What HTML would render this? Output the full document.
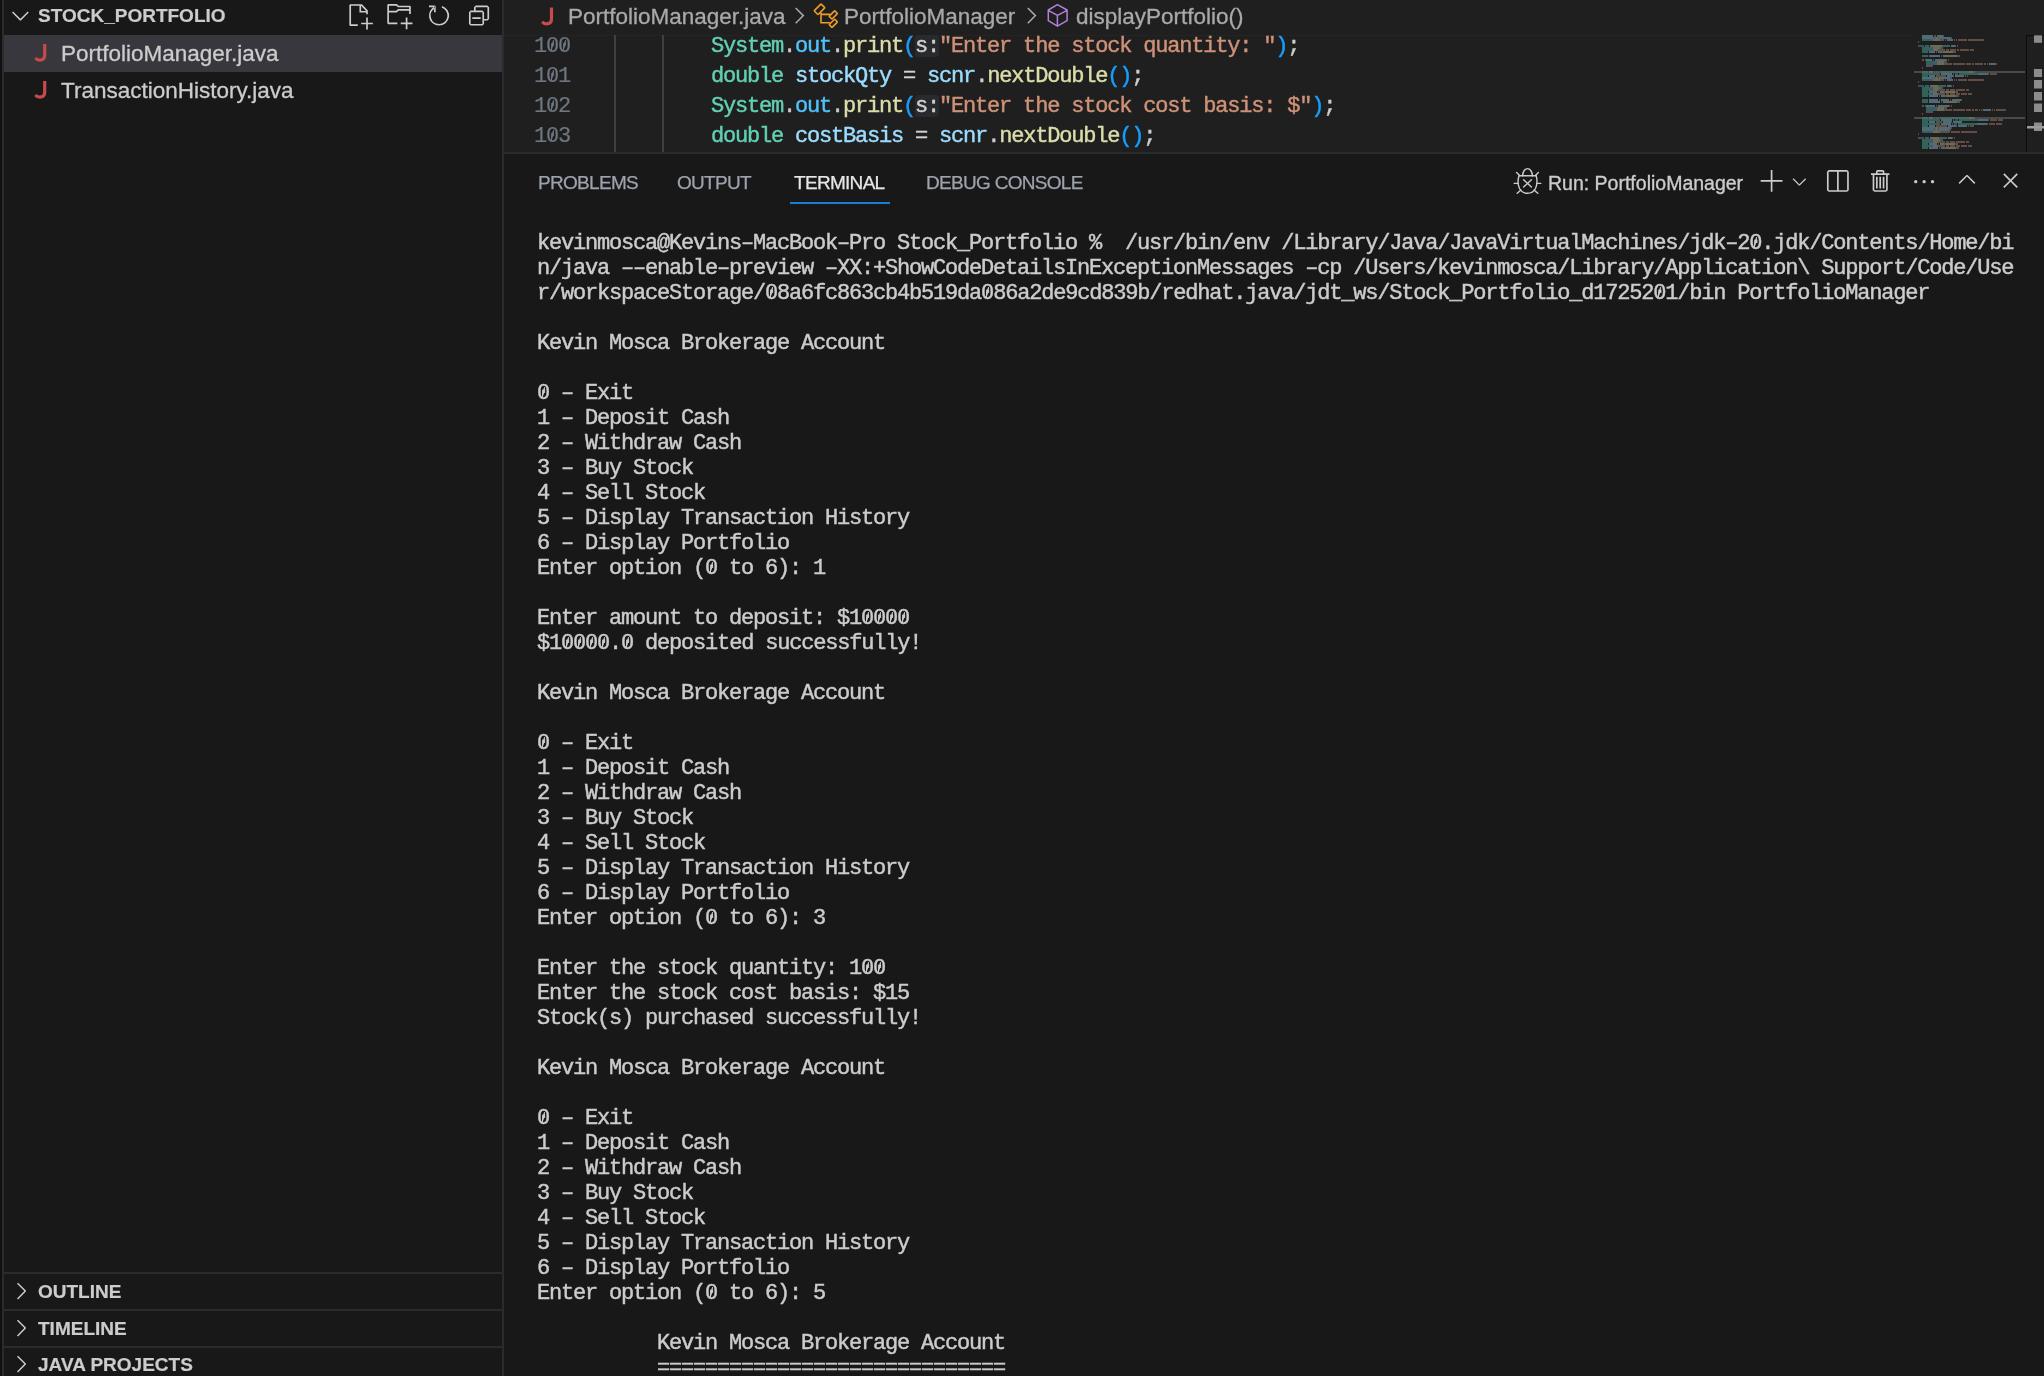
<!DOCTYPE html>
<html><head><meta charset="utf-8"><style>
*{margin:0;padding:0;box-sizing:border-box}
html,body{width:2044px;height:1376px;overflow:hidden;background:#181818}
body{position:relative;font-family:"Liberation Sans",sans-serif;color:#cccccc}
.abs{position:absolute}
.t{will-change:transform}
.mono{font-family:"Liberation Mono",monospace}
#strip{left:0;top:0;width:2px;height:1376px;background:#111111}
#strip2{left:2px;top:0;width:2px;height:1376px;background:#2b2b2b}
#side{left:4px;top:0;width:498px;height:1376px;background:#181818}
#vb{left:502px;top:0;width:2px;height:1376px;background:#2b2b2b}
#editor{left:504px;top:0;width:1540px;height:152px;background:#1f1f1f;overflow:hidden}
#hb{left:504px;top:152px;width:1540px;height:2px;background:#2b2b2b}
#panel{left:504px;top:154px;width:1540px;height:1222px;background:#181818}
.sechead{font-weight:bold;font-size:19px;color:#cccccc;white-space:nowrap;-webkit-text-stroke:0.2px currentColor}
.fname{font-size:22.5px;color:#cccccc;white-space:nowrap;-webkit-text-stroke:0.3px currentColor}
.term{left:537px;top:0;font-size:22px;letter-spacing:-1.2px;line-height:25px;white-space:pre;color:#cccccc;-webkit-text-stroke:0.45px #cccccc}
.tab{font-size:19px;letter-spacing:-0.7px;color:#9da3ad;white-space:nowrap;-webkit-text-stroke:0.25px currentColor}
.bc{font-size:22.5px;color:#a9a9a9;white-space:nowrap;-webkit-text-stroke:0.3px currentColor}
.code{font-family:"Liberation Mono",monospace;font-size:22px;letter-spacing:-1.2px;line-height:30px;white-space:pre;color:#cccccc;-webkit-text-stroke:0.45px currentColor}
.ln{font-family:"Liberation Mono",monospace;font-size:22px;letter-spacing:-1.2px;line-height:30px;white-space:pre;color:#6e7681;-webkit-text-stroke:0.2px currentColor}
.z{background:linear-gradient(to bottom right,transparent 28%,#cccccc 42%,#cccccc 58%,transparent 72%) no-repeat 4.6px 5.6px/2.9px 10px}
.ln .z{background-image:linear-gradient(to bottom right,transparent 28%,#6e7681 42%,#6e7681 58%,transparent 72%)}
.hint{background:#292a2d;border-radius:3px;width:23.4px;height:22px}
</style></head><body>
<div class="abs" id="strip"></div><div class="abs" id="strip2"></div><div class="abs" id="side"></div><div class="abs" id="vb"></div>
<div class="abs" id="editor"></div><div class="abs" id="hb"></div><div class="abs" id="panel"></div>
<div class="abs" style="left:504px;top:35px;width:1410px;height:1px;background:#242424"></div>
<div class="abs sechead t" style="left:38px;top:2px;line-height:28px">STOCK_PORTFOLIO</div>
<div class="abs" style="left:4px;top:35px;width:498px;height:37px;background:#37373d"></div>
<div class="abs fname t" style="left:61px;top:38.5px;line-height:30px">PortfolioManager.java</div>
<div class="abs fname t" style="left:61px;top:76px;line-height:30px">TransactionHistory.java</div>
<div class="abs" style="left:4px;top:1272px;width:498px;height:2px;background:#2b2b2b"></div>
<div class="abs sechead t" style="left:38px;top:1277.5px;line-height:28px">OUTLINE</div>
<div class="abs" style="left:4px;top:1309px;width:498px;height:2px;background:#2b2b2b"></div>
<div class="abs sechead t" style="left:38px;top:1314.5px;line-height:28px">TIMELINE</div>
<div class="abs" style="left:4px;top:1346px;width:498px;height:2px;background:#2b2b2b"></div>
<div class="abs sechead t" style="left:38px;top:1350.5px;line-height:28px">JAVA PROJECTS</div>
<div class="abs bc t" style="left:568px;top:1.5px;line-height:30px">PortfolioManager.java</div>
<div class="abs bc t" style="left:844px;top:1.5px;line-height:30px">PortfolioManager</div>
<div class="abs bc t" style="left:1076px;top:1.5px;line-height:30px">displayPortfolio()</div>
<div class="abs" style="left:614px;top:35px;width:2px;height:117px;background:#404040"></div>
<div class="abs" style="left:662px;top:35px;width:2px;height:117px;background:#404040"></div>
<div class="abs ln t" style="left:534px;top:32px">1<span class=z>0</span><span class=z>0</span></div>
<div class="abs ln t" style="left:534px;top:62px">1<span class=z>0</span>1</div>
<div class="abs ln t" style="left:534px;top:92px">1<span class=z>0</span>2</div>
<div class="abs ln t" style="left:534px;top:122px">1<span class=z>0</span>3</div>
<div class="abs code t" style="left:710.8px;top:32px"><span style="color:#62cfb3">System</span>.<span style="color:#4fc1ff">out</span>.<span style="color:#dcdcaa">print</span><span style="color:#179fff">(</span>  <span style="color:#ce9178">"Enter the stock quantity: "</span><span style="color:#179fff">)</span>;</div>
<div class="abs code t" style="left:710.8px;top:62px"><span style="color:#62cfb3">double</span> <span style="color:#9cdcfe">stockQty</span> <span style="color:#d4d4d4">=</span> <span style="color:#9cdcfe">scnr</span>.<span style="color:#dcdcaa">nextDouble</span><span style="color:#179fff">()</span>;</div>
<div class="abs code t" style="left:710.8px;top:92px"><span style="color:#62cfb3">System</span>.<span style="color:#4fc1ff">out</span>.<span style="color:#dcdcaa">print</span><span style="color:#179fff">(</span>  <span style="color:#ce9178">"Enter the stock cost basis: $"</span><span style="color:#179fff">)</span>;</div>
<div class="abs code t" style="left:710.8px;top:122px"><span style="color:#62cfb3">double</span> <span style="color:#9cdcfe">costBasis</span> <span style="color:#d4d4d4">=</span> <span style="color:#9cdcfe">scnr</span>.<span style="color:#dcdcaa">nextDouble</span><span style="color:#179fff">()</span>;</div>
<div class="abs hint" style="left:915.3px;top:34.9px"></div>
<div class="abs code t" style="left:915px;top:32px;color:#d0d0d0">s:</div>
<div class="abs hint" style="left:915.3px;top:94.9px"></div>
<div class="abs code t" style="left:915px;top:92px;color:#d0d0d0">s:</div>
<div class="abs tab t" style="left:538px;top:169px;line-height:28px">PROBLEMS</div>
<div class="abs tab t" style="left:677px;top:169px;line-height:28px">OUTPUT</div>
<div class="abs tab t" style="left:794px;top:169px;line-height:28px;color:#e7e7e7">TERMINAL</div>
<div class="abs tab t" style="left:926px;top:169px;line-height:28px">DEBUG CONSOLE</div>
<div class="abs" style="left:790px;top:202.3px;width:100px;height:1.6px;background:#1a7fd4"></div>
<div class="abs tab t" style="left:1548px;top:169px;line-height:28px;font-size:19.5px;letter-spacing:0;color:#cccccc;-webkit-text-stroke:0.35px #cccccc">Run: PortfolioManager</div>
<div class="abs mono term t" style="top:231px">kevinmosca@Kevins–MacBook–Pro Stock_Portfolio %  /usr/bin/env /Library/Java/JavaVirtualMachines/jdk–2<span class=z>0</span>.jdk/Contents/Home/bi
n/java ––enable–preview –XX:+ShowCodeDetailsInExceptionMessages –cp /Users/kevinmosca/Library/Application\ Support/Code/Use
r/workspaceStorage/<span class=z>0</span>8a6fc863cb4b519da<span class=z>0</span>86a2de9cd839b/redhat.java/jdt_ws/Stock_Portfolio_d17252<span class=z>0</span>1/bin PortfolioManager
 
Kevin Mosca Brokerage Account
 
<span class=z>0</span> – Exit
1 – Deposit Cash
2 – Withdraw Cash
3 – Buy Stock
4 – Sell Stock
5 – Display Transaction History
6 – Display Portfolio
Enter option (<span class=z>0</span> to 6): 1
 
Enter amount to deposit: $1<span class=z>0</span><span class=z>0</span><span class=z>0</span><span class=z>0</span>
$1<span class=z>0</span><span class=z>0</span><span class=z>0</span><span class=z>0</span>.<span class=z>0</span> deposited successfully!
 
Kevin Mosca Brokerage Account
 
<span class=z>0</span> – Exit
1 – Deposit Cash
2 – Withdraw Cash
3 – Buy Stock
4 – Sell Stock
5 – Display Transaction History
6 – Display Portfolio
Enter option (<span class=z>0</span> to 6): 3
 
Enter the stock quantity: 1<span class=z>0</span><span class=z>0</span>
Enter the stock cost basis: $15
Stock(s) purchased successfully!
 
Kevin Mosca Brokerage Account
 
<span class=z>0</span> – Exit
1 – Deposit Cash
2 – Withdraw Cash
3 – Buy Stock
4 – Sell Stock
5 – Display Transaction History
6 – Display Portfolio
Enter option (<span class=z>0</span> to 6): 5
 
          Kevin Mosca Brokerage Account
          =============================</div>
<svg class="abs" style="left:0;top:0" width="2044" height="1376">
<rect x="1922" y="35.35" width="11" height="1.3" fill="#9cdcfe" fill-opacity="0.62"/>
<rect x="1934" y="35.35" width="2" height="1.3" fill="#cccccc" fill-opacity="0.45"/>
<rect x="1937" y="35.35" width="6" height="1.3" fill="#9cdcfe" fill-opacity="0.62"/>
<rect x="1943" y="35.35" width="1" height="1.3" fill="#cccccc" fill-opacity="0.45"/>
<rect x="1922" y="37.35" width="12" height="1.3" fill="#9cdcfe" fill-opacity="0.62"/>
<rect x="1934" y="37.35" width="1" height="1.3" fill="#cccccc" fill-opacity="0.45"/>
<rect x="1935" y="37.35" width="3" height="1.3" fill="#dcdcaa" fill-opacity="0.62"/>
<rect x="1938" y="37.35" width="1" height="1.3" fill="#cccccc" fill-opacity="0.45"/>
<rect x="1939" y="37.35" width="11" height="1.3" fill="#9cdcfe" fill-opacity="0.62"/>
<rect x="1950" y="37.35" width="2" height="1.3" fill="#cccccc" fill-opacity="0.45"/>
<rect x="1922" y="39.35" width="6" height="1.3" fill="#4ec9b0" fill-opacity="0.62"/>
<rect x="1928" y="39.35" width="1" height="1.3" fill="#cccccc" fill-opacity="0.45"/>
<rect x="1929" y="39.35" width="3" height="1.3" fill="#4fc1ff" fill-opacity="0.62"/>
<rect x="1932" y="39.35" width="1" height="1.3" fill="#cccccc" fill-opacity="0.45"/>
<rect x="1933" y="39.35" width="7" height="1.3" fill="#dcdcaa" fill-opacity="0.62"/>
<rect x="1940" y="39.35" width="1" height="1.3" fill="#cccccc" fill-opacity="0.45"/>
<rect x="1941" y="39.35" width="3" height="1.3" fill="#ce9178" fill-opacity="0.62"/>
<rect x="1945" y="39.35" width="1" height="1.3" fill="#cccccc" fill-opacity="0.45"/>
<rect x="1947" y="39.35" width="6" height="1.3" fill="#9cdcfe" fill-opacity="0.62"/>
<rect x="1954" y="39.35" width="1" height="1.3" fill="#cccccc" fill-opacity="0.45"/>
<rect x="1956" y="39.35" width="1" height="1.3" fill="#ce9178" fill-opacity="0.62"/>
<rect x="1958" y="39.35" width="9" height="1.3" fill="#ce9178" fill-opacity="0.62"/>
<rect x="1968" y="39.35" width="14" height="1.3" fill="#ce9178" fill-opacity="0.62"/>
<rect x="1982" y="39.35" width="2" height="1.3" fill="#cccccc" fill-opacity="0.45"/>
<rect x="1918" y="41.35" width="1" height="1.3" fill="#cccccc" fill-opacity="0.45"/>
<rect x="1918" y="45.35" width="6" height="1.3" fill="#569cd6" fill-opacity="0.62"/>
<rect x="1925" y="45.35" width="4" height="1.3" fill="#4ec9b0" fill-opacity="0.62"/>
<rect x="1930" y="45.35" width="12" height="1.3" fill="#dcdcaa" fill-opacity="0.62"/>
<rect x="1942" y="45.35" width="1" height="1.3" fill="#cccccc" fill-opacity="0.45"/>
<rect x="1943" y="45.35" width="7" height="1.3" fill="#4ec9b0" fill-opacity="0.62"/>
<rect x="1951" y="45.35" width="4" height="1.3" fill="#9cdcfe" fill-opacity="0.62"/>
<rect x="1955" y="45.35" width="1" height="1.3" fill="#cccccc" fill-opacity="0.45"/>
<rect x="1957" y="45.35" width="1" height="1.3" fill="#cccccc" fill-opacity="0.45"/>
<rect x="1922" y="47.35" width="6" height="1.3" fill="#4ec9b0" fill-opacity="0.62"/>
<rect x="1928" y="47.35" width="1" height="1.3" fill="#cccccc" fill-opacity="0.45"/>
<rect x="1929" y="47.35" width="3" height="1.3" fill="#4fc1ff" fill-opacity="0.62"/>
<rect x="1932" y="47.35" width="1" height="1.3" fill="#cccccc" fill-opacity="0.45"/>
<rect x="1933" y="47.35" width="7" height="1.3" fill="#dcdcaa" fill-opacity="0.62"/>
<rect x="1940" y="47.35" width="3" height="1.3" fill="#cccccc" fill-opacity="0.45"/>
<rect x="1922" y="49.35" width="6" height="1.3" fill="#4ec9b0" fill-opacity="0.62"/>
<rect x="1928" y="49.35" width="1" height="1.3" fill="#cccccc" fill-opacity="0.45"/>
<rect x="1929" y="49.35" width="3" height="1.3" fill="#4fc1ff" fill-opacity="0.62"/>
<rect x="1932" y="49.35" width="1" height="1.3" fill="#cccccc" fill-opacity="0.45"/>
<rect x="1933" y="49.35" width="5" height="1.3" fill="#dcdcaa" fill-opacity="0.62"/>
<rect x="1938" y="49.35" width="1" height="1.3" fill="#cccccc" fill-opacity="0.45"/>
<rect x="1939" y="49.35" width="6" height="1.3" fill="#ce9178" fill-opacity="0.62"/>
<rect x="1946" y="49.35" width="3" height="1.3" fill="#ce9178" fill-opacity="0.62"/>
<rect x="1950" y="49.35" width="6" height="1.3" fill="#ce9178" fill-opacity="0.62"/>
<rect x="1957" y="49.35" width="2" height="1.3" fill="#ce9178" fill-opacity="0.62"/>
<rect x="1960" y="49.35" width="9" height="1.3" fill="#ce9178" fill-opacity="0.62"/>
<rect x="1970" y="49.35" width="2" height="1.3" fill="#ce9178" fill-opacity="0.62"/>
<rect x="1972" y="49.35" width="2" height="1.3" fill="#cccccc" fill-opacity="0.45"/>
<rect x="1922" y="51.35" width="6" height="1.3" fill="#4ec9b0" fill-opacity="0.62"/>
<rect x="1929" y="51.35" width="6" height="1.3" fill="#9cdcfe" fill-opacity="0.62"/>
<rect x="1936" y="51.35" width="1" height="1.3" fill="#cccccc" fill-opacity="0.45"/>
<rect x="1938" y="51.35" width="4" height="1.3" fill="#9cdcfe" fill-opacity="0.62"/>
<rect x="1942" y="51.35" width="1" height="1.3" fill="#cccccc" fill-opacity="0.45"/>
<rect x="1943" y="51.35" width="10" height="1.3" fill="#dcdcaa" fill-opacity="0.62"/>
<rect x="1953" y="51.35" width="3" height="1.3" fill="#cccccc" fill-opacity="0.45"/>
<rect x="1922" y="55.35" width="6" height="1.3" fill="#4ec9b0" fill-opacity="0.62"/>
<rect x="1929" y="55.35" width="11" height="1.3" fill="#9cdcfe" fill-opacity="0.62"/>
<rect x="1941" y="55.35" width="1" height="1.3" fill="#cccccc" fill-opacity="0.45"/>
<rect x="1943" y="55.35" width="14" height="1.3" fill="#dcdcaa" fill-opacity="0.62"/>
<rect x="1957" y="55.35" width="3" height="1.3" fill="#cccccc" fill-opacity="0.45"/>
<rect x="1922" y="59.35" width="2" height="1.3" fill="#c586c0" fill-opacity="0.62"/>
<rect x="1925" y="59.35" width="1" height="1.3" fill="#cccccc" fill-opacity="0.45"/>
<rect x="1926" y="59.35" width="6" height="1.3" fill="#9cdcfe" fill-opacity="0.62"/>
<rect x="1933" y="59.35" width="1" height="1.3" fill="#cccccc" fill-opacity="0.45"/>
<rect x="1935" y="59.35" width="11" height="1.3" fill="#9cdcfe" fill-opacity="0.62"/>
<rect x="1946" y="59.35" width="1" height="1.3" fill="#cccccc" fill-opacity="0.45"/>
<rect x="1948" y="59.35" width="1" height="1.3" fill="#cccccc" fill-opacity="0.45"/>
<rect x="1926" y="61.35" width="6" height="1.3" fill="#4ec9b0" fill-opacity="0.62"/>
<rect x="1932" y="61.35" width="1" height="1.3" fill="#cccccc" fill-opacity="0.45"/>
<rect x="1933" y="61.35" width="3" height="1.3" fill="#4fc1ff" fill-opacity="0.62"/>
<rect x="1936" y="61.35" width="1" height="1.3" fill="#cccccc" fill-opacity="0.45"/>
<rect x="1937" y="61.35" width="7" height="1.3" fill="#dcdcaa" fill-opacity="0.62"/>
<rect x="1944" y="61.35" width="3" height="1.3" fill="#cccccc" fill-opacity="0.45"/>
<rect x="1926" y="63.35" width="6" height="1.3" fill="#4ec9b0" fill-opacity="0.62"/>
<rect x="1932" y="63.35" width="1" height="1.3" fill="#cccccc" fill-opacity="0.45"/>
<rect x="1933" y="63.35" width="3" height="1.3" fill="#4fc1ff" fill-opacity="0.62"/>
<rect x="1936" y="63.35" width="1" height="1.3" fill="#cccccc" fill-opacity="0.45"/>
<rect x="1937" y="63.35" width="7" height="1.3" fill="#dcdcaa" fill-opacity="0.62"/>
<rect x="1944" y="63.35" width="1" height="1.3" fill="#cccccc" fill-opacity="0.45"/>
<rect x="1945" y="63.35" width="7" height="1.3" fill="#ce9178" fill-opacity="0.62"/>
<rect x="1953" y="63.35" width="12" height="1.3" fill="#ce9178" fill-opacity="0.62"/>
<rect x="1966" y="63.35" width="5" height="1.3" fill="#ce9178" fill-opacity="0.62"/>
<rect x="1972" y="63.35" width="2" height="1.3" fill="#ce9178" fill-opacity="0.62"/>
<rect x="1975" y="63.35" width="8" height="1.3" fill="#ce9178" fill-opacity="0.62"/>
<rect x="1984" y="63.35" width="2" height="1.3" fill="#ce9178" fill-opacity="0.62"/>
<rect x="1987" y="63.35" width="1" height="1.3" fill="#cccccc" fill-opacity="0.45"/>
<rect x="1989" y="63.35" width="6" height="1.3" fill="#9cdcfe" fill-opacity="0.62"/>
<rect x="1995" y="63.35" width="2" height="1.3" fill="#cccccc" fill-opacity="0.45"/>
<rect x="1926" y="65.35" width="6" height="1.3" fill="#c586c0" fill-opacity="0.62"/>
<rect x="1932" y="65.35" width="1" height="1.3" fill="#cccccc" fill-opacity="0.45"/>
<rect x="1922" y="67.35" width="1" height="1.3" fill="#cccccc" fill-opacity="0.45"/>
<rect x="1914" y="71" width="111" height="2" fill="#4a4a4a"/>
<rect x="1922" y="71.35" width="6" height="1.3" fill="#4ec9b0" fill-opacity="0.37"/>
<rect x="1929" y="71.35" width="4" height="1.3" fill="#9cdcfe" fill-opacity="0.37"/>
<rect x="1934" y="71.35" width="1" height="1.3" fill="#cccccc" fill-opacity="0.27"/>
<rect x="1936" y="71.35" width="3" height="1.3" fill="#569cd6" fill-opacity="0.37"/>
<rect x="1940" y="71.35" width="18" height="1.3" fill="#4ec9b0" fill-opacity="0.37"/>
<rect x="1958" y="71.35" width="1" height="1.3" fill="#cccccc" fill-opacity="0.27"/>
<rect x="1959" y="71.35" width="9" height="1.3" fill="#4ec9b0" fill-opacity="0.37"/>
<rect x="1968" y="71.35" width="1" height="1.3" fill="#cccccc" fill-opacity="0.27"/>
<rect x="1969" y="71.35" width="3" height="1.3" fill="#dcdcaa" fill-opacity="0.37"/>
<rect x="1972" y="71.35" width="3" height="1.3" fill="#cccccc" fill-opacity="0.27"/>
<rect x="1922" y="73.35" width="18" height="1.3" fill="#4ec9b0" fill-opacity="0.62"/>
<rect x="1941" y="73.35" width="11" height="1.3" fill="#9cdcfe" fill-opacity="0.62"/>
<rect x="1953" y="73.35" width="1" height="1.3" fill="#cccccc" fill-opacity="0.45"/>
<rect x="1955" y="73.35" width="3" height="1.3" fill="#569cd6" fill-opacity="0.62"/>
<rect x="1959" y="73.35" width="18" height="1.3" fill="#4ec9b0" fill-opacity="0.62"/>
<rect x="1977" y="73.35" width="1" height="1.3" fill="#cccccc" fill-opacity="0.45"/>
<rect x="1978" y="73.35" width="10" height="1.3" fill="#9cdcfe" fill-opacity="0.62"/>
<rect x="1988" y="73.35" width="1" height="1.3" fill="#cccccc" fill-opacity="0.45"/>
<rect x="1990" y="73.35" width="6" height="1.3" fill="#ce9178" fill-opacity="0.62"/>
<rect x="1996" y="73.35" width="1" height="1.3" fill="#cccccc" fill-opacity="0.45"/>
<rect x="1922" y="75.35" width="6" height="1.3" fill="#4ec9b0" fill-opacity="0.62"/>
<rect x="1929" y="75.35" width="6" height="1.3" fill="#9cdcfe" fill-opacity="0.62"/>
<rect x="1936" y="75.35" width="10" height="1.3" fill="#ce9178" fill-opacity="0.62"/>
<rect x="1947" y="75.35" width="6" height="1.3" fill="#9cdcfe" fill-opacity="0.62"/>
<rect x="1953" y="75.35" width="1" height="1.3" fill="#cccccc" fill-opacity="0.45"/>
<rect x="1955" y="75.35" width="9" height="1.3" fill="#9cdcfe" fill-opacity="0.62"/>
<rect x="1965" y="75.35" width="1" height="1.3" fill="#cccccc" fill-opacity="0.45"/>
<rect x="1967" y="75.35" width="1" height="1.3" fill="#cccccc" fill-opacity="0.45"/>
<rect x="1922" y="77.35" width="12" height="1.3" fill="#9cdcfe" fill-opacity="0.62"/>
<rect x="1934" y="77.35" width="1" height="1.3" fill="#cccccc" fill-opacity="0.45"/>
<rect x="1935" y="77.35" width="3" height="1.3" fill="#dcdcaa" fill-opacity="0.62"/>
<rect x="1938" y="77.35" width="1" height="1.3" fill="#cccccc" fill-opacity="0.45"/>
<rect x="1939" y="77.35" width="11" height="1.3" fill="#9cdcfe" fill-opacity="0.62"/>
<rect x="1950" y="77.35" width="2" height="1.3" fill="#cccccc" fill-opacity="0.45"/>
<rect x="1922" y="79.35" width="6" height="1.3" fill="#4ec9b0" fill-opacity="0.62"/>
<rect x="1928" y="79.35" width="1" height="1.3" fill="#cccccc" fill-opacity="0.45"/>
<rect x="1929" y="79.35" width="3" height="1.3" fill="#4fc1ff" fill-opacity="0.62"/>
<rect x="1932" y="79.35" width="1" height="1.3" fill="#cccccc" fill-opacity="0.45"/>
<rect x="1933" y="79.35" width="7" height="1.3" fill="#dcdcaa" fill-opacity="0.62"/>
<rect x="1940" y="79.35" width="1" height="1.3" fill="#cccccc" fill-opacity="0.45"/>
<rect x="1941" y="79.35" width="3" height="1.3" fill="#ce9178" fill-opacity="0.62"/>
<rect x="1945" y="79.35" width="1" height="1.3" fill="#cccccc" fill-opacity="0.45"/>
<rect x="1947" y="79.35" width="6" height="1.3" fill="#9cdcfe" fill-opacity="0.62"/>
<rect x="1954" y="79.35" width="1" height="1.3" fill="#cccccc" fill-opacity="0.45"/>
<rect x="1956" y="79.35" width="1" height="1.3" fill="#ce9178" fill-opacity="0.62"/>
<rect x="1958" y="79.35" width="9" height="1.3" fill="#ce9178" fill-opacity="0.62"/>
<rect x="1968" y="79.35" width="14" height="1.3" fill="#ce9178" fill-opacity="0.62"/>
<rect x="1982" y="79.35" width="2" height="1.3" fill="#cccccc" fill-opacity="0.45"/>
<rect x="1918" y="81.35" width="1" height="1.3" fill="#cccccc" fill-opacity="0.45"/>
<rect x="1918" y="85.35" width="6" height="1.3" fill="#569cd6" fill-opacity="0.62"/>
<rect x="1925" y="85.35" width="4" height="1.3" fill="#4ec9b0" fill-opacity="0.62"/>
<rect x="1930" y="85.35" width="8" height="1.3" fill="#dcdcaa" fill-opacity="0.62"/>
<rect x="1938" y="85.35" width="1" height="1.3" fill="#cccccc" fill-opacity="0.45"/>
<rect x="1939" y="85.35" width="7" height="1.3" fill="#4ec9b0" fill-opacity="0.62"/>
<rect x="1947" y="85.35" width="4" height="1.3" fill="#9cdcfe" fill-opacity="0.62"/>
<rect x="1951" y="85.35" width="1" height="1.3" fill="#cccccc" fill-opacity="0.45"/>
<rect x="1953" y="85.35" width="1" height="1.3" fill="#cccccc" fill-opacity="0.45"/>
<rect x="1922" y="87.35" width="6" height="1.3" fill="#4ec9b0" fill-opacity="0.62"/>
<rect x="1928" y="87.35" width="1" height="1.3" fill="#cccccc" fill-opacity="0.45"/>
<rect x="1929" y="87.35" width="3" height="1.3" fill="#4fc1ff" fill-opacity="0.62"/>
<rect x="1932" y="87.35" width="1" height="1.3" fill="#cccccc" fill-opacity="0.45"/>
<rect x="1933" y="87.35" width="7" height="1.3" fill="#dcdcaa" fill-opacity="0.62"/>
<rect x="1940" y="87.35" width="3" height="1.3" fill="#cccccc" fill-opacity="0.45"/>
<rect x="1922" y="89.35" width="6" height="1.3" fill="#4ec9b0" fill-opacity="0.62"/>
<rect x="1928" y="89.35" width="1" height="1.3" fill="#cccccc" fill-opacity="0.45"/>
<rect x="1929" y="89.35" width="3" height="1.3" fill="#4fc1ff" fill-opacity="0.62"/>
<rect x="1932" y="89.35" width="1" height="1.3" fill="#cccccc" fill-opacity="0.45"/>
<rect x="1933" y="89.35" width="5" height="1.3" fill="#dcdcaa" fill-opacity="0.62"/>
<rect x="1938" y="89.35" width="1" height="1.3" fill="#cccccc" fill-opacity="0.45"/>
<rect x="1939" y="89.35" width="6" height="1.3" fill="#ce9178" fill-opacity="0.62"/>
<rect x="1946" y="89.35" width="3" height="1.3" fill="#ce9178" fill-opacity="0.62"/>
<rect x="1950" y="89.35" width="5" height="1.3" fill="#ce9178" fill-opacity="0.62"/>
<rect x="1956" y="89.35" width="9" height="1.3" fill="#ce9178" fill-opacity="0.62"/>
<rect x="1966" y="89.35" width="1" height="1.3" fill="#ce9178" fill-opacity="0.62"/>
<rect x="1967" y="89.35" width="2" height="1.3" fill="#cccccc" fill-opacity="0.45"/>
<rect x="1922" y="91.35" width="6" height="1.3" fill="#4ec9b0" fill-opacity="0.62"/>
<rect x="1929" y="91.35" width="8" height="1.3" fill="#9cdcfe" fill-opacity="0.62"/>
<rect x="1938" y="91.35" width="1" height="1.3" fill="#cccccc" fill-opacity="0.45"/>
<rect x="1940" y="91.35" width="4" height="1.3" fill="#9cdcfe" fill-opacity="0.62"/>
<rect x="1944" y="91.35" width="1" height="1.3" fill="#cccccc" fill-opacity="0.45"/>
<rect x="1945" y="91.35" width="10" height="1.3" fill="#dcdcaa" fill-opacity="0.62"/>
<rect x="1955" y="91.35" width="3" height="1.3" fill="#cccccc" fill-opacity="0.45"/>
<rect x="1922" y="93.35" width="6" height="1.3" fill="#4ec9b0" fill-opacity="0.62"/>
<rect x="1928" y="93.35" width="1" height="1.3" fill="#cccccc" fill-opacity="0.45"/>
<rect x="1929" y="93.35" width="3" height="1.3" fill="#4fc1ff" fill-opacity="0.62"/>
<rect x="1932" y="93.35" width="1" height="1.3" fill="#cccccc" fill-opacity="0.45"/>
<rect x="1933" y="93.35" width="5" height="1.3" fill="#dcdcaa" fill-opacity="0.62"/>
<rect x="1938" y="93.35" width="1" height="1.3" fill="#cccccc" fill-opacity="0.45"/>
<rect x="1939" y="93.35" width="6" height="1.3" fill="#ce9178" fill-opacity="0.62"/>
<rect x="1946" y="93.35" width="3" height="1.3" fill="#ce9178" fill-opacity="0.62"/>
<rect x="1950" y="93.35" width="5" height="1.3" fill="#ce9178" fill-opacity="0.62"/>
<rect x="1956" y="93.35" width="4" height="1.3" fill="#ce9178" fill-opacity="0.62"/>
<rect x="1961" y="93.35" width="6" height="1.3" fill="#ce9178" fill-opacity="0.62"/>
<rect x="1968" y="93.35" width="2" height="1.3" fill="#ce9178" fill-opacity="0.62"/>
<rect x="1970" y="93.35" width="2" height="1.3" fill="#cccccc" fill-opacity="0.45"/>
<rect x="1922" y="95.35" width="6" height="1.3" fill="#4ec9b0" fill-opacity="0.62"/>
<rect x="1929" y="95.35" width="9" height="1.3" fill="#9cdcfe" fill-opacity="0.62"/>
<rect x="1939" y="95.35" width="1" height="1.3" fill="#cccccc" fill-opacity="0.45"/>
<rect x="1941" y="95.35" width="4" height="1.3" fill="#9cdcfe" fill-opacity="0.62"/>
<rect x="1945" y="95.35" width="1" height="1.3" fill="#cccccc" fill-opacity="0.45"/>
<rect x="1946" y="95.35" width="10" height="1.3" fill="#dcdcaa" fill-opacity="0.62"/>
<rect x="1956" y="95.35" width="3" height="1.3" fill="#cccccc" fill-opacity="0.45"/>
<rect x="1922" y="99.35" width="6" height="1.3" fill="#4ec9b0" fill-opacity="0.62"/>
<rect x="1929" y="99.35" width="9" height="1.3" fill="#9cdcfe" fill-opacity="0.62"/>
<rect x="1939" y="99.35" width="1" height="1.3" fill="#cccccc" fill-opacity="0.45"/>
<rect x="1941" y="99.35" width="8" height="1.3" fill="#9cdcfe" fill-opacity="0.62"/>
<rect x="1950" y="99.35" width="1" height="1.3" fill="#cccccc" fill-opacity="0.45"/>
<rect x="1952" y="99.35" width="9" height="1.3" fill="#9cdcfe" fill-opacity="0.62"/>
<rect x="1961" y="99.35" width="1" height="1.3" fill="#cccccc" fill-opacity="0.45"/>
<rect x="1922" y="101.35" width="6" height="1.3" fill="#4ec9b0" fill-opacity="0.62"/>
<rect x="1929" y="101.35" width="11" height="1.3" fill="#9cdcfe" fill-opacity="0.62"/>
<rect x="1941" y="101.35" width="1" height="1.3" fill="#cccccc" fill-opacity="0.45"/>
<rect x="1943" y="101.35" width="14" height="1.3" fill="#dcdcaa" fill-opacity="0.62"/>
<rect x="1957" y="101.35" width="3" height="1.3" fill="#cccccc" fill-opacity="0.45"/>
<rect x="1922" y="105.35" width="2" height="1.3" fill="#c586c0" fill-opacity="0.62"/>
<rect x="1925" y="105.35" width="1" height="1.3" fill="#cccccc" fill-opacity="0.45"/>
<rect x="1926" y="105.35" width="9" height="1.3" fill="#9cdcfe" fill-opacity="0.62"/>
<rect x="1936" y="105.35" width="1" height="1.3" fill="#cccccc" fill-opacity="0.45"/>
<rect x="1938" y="105.35" width="11" height="1.3" fill="#9cdcfe" fill-opacity="0.62"/>
<rect x="1949" y="105.35" width="1" height="1.3" fill="#cccccc" fill-opacity="0.45"/>
<rect x="1951" y="105.35" width="1" height="1.3" fill="#cccccc" fill-opacity="0.45"/>
<rect x="1926" y="107.35" width="6" height="1.3" fill="#4ec9b0" fill-opacity="0.62"/>
<rect x="1932" y="107.35" width="1" height="1.3" fill="#cccccc" fill-opacity="0.45"/>
<rect x="1933" y="107.35" width="3" height="1.3" fill="#4fc1ff" fill-opacity="0.62"/>
<rect x="1936" y="107.35" width="1" height="1.3" fill="#cccccc" fill-opacity="0.45"/>
<rect x="1937" y="107.35" width="7" height="1.3" fill="#dcdcaa" fill-opacity="0.62"/>
<rect x="1944" y="107.35" width="3" height="1.3" fill="#cccccc" fill-opacity="0.45"/>
<rect x="1926" y="109.35" width="6" height="1.3" fill="#4ec9b0" fill-opacity="0.62"/>
<rect x="1932" y="109.35" width="1" height="1.3" fill="#cccccc" fill-opacity="0.45"/>
<rect x="1933" y="109.35" width="3" height="1.3" fill="#4fc1ff" fill-opacity="0.62"/>
<rect x="1936" y="109.35" width="1" height="1.3" fill="#cccccc" fill-opacity="0.45"/>
<rect x="1937" y="109.35" width="7" height="1.3" fill="#dcdcaa" fill-opacity="0.62"/>
<rect x="1944" y="109.35" width="1" height="1.3" fill="#cccccc" fill-opacity="0.45"/>
<rect x="1945" y="109.35" width="7" height="1.3" fill="#ce9178" fill-opacity="0.62"/>
<rect x="1953" y="109.35" width="12" height="1.3" fill="#ce9178" fill-opacity="0.62"/>
<rect x="1966" y="109.35" width="5" height="1.3" fill="#ce9178" fill-opacity="0.62"/>
<rect x="1972" y="109.35" width="2" height="1.3" fill="#ce9178" fill-opacity="0.62"/>
<rect x="1975" y="109.35" width="3" height="1.3" fill="#ce9178" fill-opacity="0.62"/>
<rect x="1979" y="109.35" width="1" height="1.3" fill="#ce9178" fill-opacity="0.62"/>
<rect x="1981" y="109.35" width="1" height="1.3" fill="#cccccc" fill-opacity="0.45"/>
<rect x="1983" y="109.35" width="8" height="1.3" fill="#9cdcfe" fill-opacity="0.62"/>
<rect x="1992" y="109.35" width="1" height="1.3" fill="#cccccc" fill-opacity="0.45"/>
<rect x="1994" y="109.35" width="1" height="1.3" fill="#ce9178" fill-opacity="0.62"/>
<rect x="1996" y="109.35" width="8" height="1.3" fill="#ce9178" fill-opacity="0.62"/>
<rect x="2004" y="109.35" width="2" height="1.3" fill="#cccccc" fill-opacity="0.45"/>
<rect x="1926" y="111.35" width="6" height="1.3" fill="#c586c0" fill-opacity="0.62"/>
<rect x="1932" y="111.35" width="1" height="1.3" fill="#cccccc" fill-opacity="0.45"/>
<rect x="1922" y="113.35" width="1" height="1.3" fill="#cccccc" fill-opacity="0.45"/>
<rect x="1914" y="117" width="111" height="2" fill="#4a4a4a"/>
<rect x="1922" y="117.35" width="6" height="1.3" fill="#4ec9b0" fill-opacity="0.37"/>
<rect x="1929" y="117.35" width="4" height="1.3" fill="#9cdcfe" fill-opacity="0.37"/>
<rect x="1934" y="117.35" width="1" height="1.3" fill="#cccccc" fill-opacity="0.27"/>
<rect x="1936" y="117.35" width="3" height="1.3" fill="#569cd6" fill-opacity="0.37"/>
<rect x="1940" y="117.35" width="18" height="1.3" fill="#4ec9b0" fill-opacity="0.37"/>
<rect x="1958" y="117.35" width="1" height="1.3" fill="#cccccc" fill-opacity="0.27"/>
<rect x="1959" y="117.35" width="9" height="1.3" fill="#4ec9b0" fill-opacity="0.37"/>
<rect x="1968" y="117.35" width="1" height="1.3" fill="#cccccc" fill-opacity="0.27"/>
<rect x="1969" y="117.35" width="3" height="1.3" fill="#dcdcaa" fill-opacity="0.37"/>
<rect x="1972" y="117.35" width="3" height="1.3" fill="#cccccc" fill-opacity="0.27"/>
<rect x="1922" y="119.35" width="18" height="1.3" fill="#4ec9b0" fill-opacity="0.62"/>
<rect x="1941" y="119.35" width="11" height="1.3" fill="#9cdcfe" fill-opacity="0.62"/>
<rect x="1953" y="119.35" width="1" height="1.3" fill="#cccccc" fill-opacity="0.45"/>
<rect x="1955" y="119.35" width="3" height="1.3" fill="#569cd6" fill-opacity="0.62"/>
<rect x="1959" y="119.35" width="18" height="1.3" fill="#4ec9b0" fill-opacity="0.62"/>
<rect x="1977" y="119.35" width="1" height="1.3" fill="#cccccc" fill-opacity="0.45"/>
<rect x="1978" y="119.35" width="10" height="1.3" fill="#9cdcfe" fill-opacity="0.62"/>
<rect x="1988" y="119.35" width="1" height="1.3" fill="#cccccc" fill-opacity="0.45"/>
<rect x="1990" y="119.35" width="6" height="1.3" fill="#ce9178" fill-opacity="0.62"/>
<rect x="1996" y="119.35" width="1" height="1.3" fill="#cccccc" fill-opacity="0.45"/>
<rect x="1998" y="119.35" width="5" height="1.3" fill="#ce9178" fill-opacity="0.62"/>
<rect x="1922" y="121.35" width="6" height="1.3" fill="#4ec9b0" fill-opacity="0.62"/>
<rect x="1929" y="121.35" width="6" height="1.3" fill="#9cdcfe" fill-opacity="0.62"/>
<rect x="1936" y="121.35" width="5" height="1.3" fill="#ce9178" fill-opacity="0.62"/>
<rect x="1941" y="121.35" width="1" height="1.3" fill="#cccccc" fill-opacity="0.45"/>
<rect x="1943" y="121.35" width="8" height="1.3" fill="#9cdcfe" fill-opacity="0.62"/>
<rect x="1951" y="121.35" width="1" height="1.3" fill="#cccccc" fill-opacity="0.45"/>
<rect x="1953" y="121.35" width="9" height="1.3" fill="#9cdcfe" fill-opacity="0.62"/>
<rect x="1922" y="123.35" width="18" height="1.3" fill="#4ec9b0" fill-opacity="0.62"/>
<rect x="1941" y="123.35" width="10" height="1.3" fill="#9cdcfe" fill-opacity="0.62"/>
<rect x="1952" y="123.35" width="1" height="1.3" fill="#cccccc" fill-opacity="0.45"/>
<rect x="1954" y="123.35" width="3" height="1.3" fill="#569cd6" fill-opacity="0.62"/>
<rect x="1958" y="123.35" width="18" height="1.3" fill="#4ec9b0" fill-opacity="0.62"/>
<rect x="1976" y="123.35" width="1" height="1.3" fill="#cccccc" fill-opacity="0.45"/>
<rect x="1977" y="123.35" width="10" height="1.3" fill="#9cdcfe" fill-opacity="0.62"/>
<rect x="1987" y="123.35" width="1" height="1.3" fill="#cccccc" fill-opacity="0.45"/>
<rect x="1989" y="123.35" width="5" height="1.3" fill="#ce9178" fill-opacity="0.62"/>
<rect x="1994" y="123.35" width="1" height="1.3" fill="#cccccc" fill-opacity="0.45"/>
<rect x="1996" y="123.35" width="5" height="1.3" fill="#ce9178" fill-opacity="0.62"/>
<rect x="2001" y="123.35" width="1" height="1.3" fill="#cccccc" fill-opacity="0.45"/>
<rect x="1922" y="125.35" width="6" height="1.3" fill="#4ec9b0" fill-opacity="0.62"/>
<rect x="1929" y="125.35" width="6" height="1.3" fill="#9cdcfe" fill-opacity="0.62"/>
<rect x="1936" y="125.35" width="10" height="1.3" fill="#ce9178" fill-opacity="0.62"/>
<rect x="1946" y="125.35" width="1" height="1.3" fill="#cccccc" fill-opacity="0.45"/>
<rect x="1948" y="125.35" width="8" height="1.3" fill="#9cdcfe" fill-opacity="0.62"/>
<rect x="1956" y="125.35" width="1" height="1.3" fill="#cccccc" fill-opacity="0.45"/>
<rect x="1958" y="125.35" width="9" height="1.3" fill="#9cdcfe" fill-opacity="0.62"/>
<rect x="1968" y="125.35" width="1" height="1.3" fill="#cccccc" fill-opacity="0.45"/>
<rect x="1970" y="125.35" width="4" height="1.3" fill="#cccccc" fill-opacity="0.45"/>
<rect x="1922" y="127.35" width="12" height="1.3" fill="#9cdcfe" fill-opacity="0.62"/>
<rect x="1934" y="127.35" width="1" height="1.3" fill="#cccccc" fill-opacity="0.45"/>
<rect x="1935" y="127.35" width="3" height="1.3" fill="#dcdcaa" fill-opacity="0.62"/>
<rect x="1938" y="127.35" width="1" height="1.3" fill="#cccccc" fill-opacity="0.45"/>
<rect x="1939" y="127.35" width="11" height="1.3" fill="#9cdcfe" fill-opacity="0.62"/>
<rect x="1950" y="127.35" width="2" height="1.3" fill="#cccccc" fill-opacity="0.45"/>
<rect x="1922" y="129.35" width="12" height="1.3" fill="#9cdcfe" fill-opacity="0.62"/>
<rect x="1934" y="129.35" width="1" height="1.3" fill="#cccccc" fill-opacity="0.45"/>
<rect x="1935" y="129.35" width="3" height="1.3" fill="#dcdcaa" fill-opacity="0.62"/>
<rect x="1938" y="129.35" width="1" height="1.3" fill="#cccccc" fill-opacity="0.45"/>
<rect x="1939" y="129.35" width="10" height="1.3" fill="#9cdcfe" fill-opacity="0.62"/>
<rect x="1949" y="129.35" width="2" height="1.3" fill="#cccccc" fill-opacity="0.45"/>
<rect x="1922" y="131.35" width="6" height="1.3" fill="#4ec9b0" fill-opacity="0.62"/>
<rect x="1928" y="131.35" width="1" height="1.3" fill="#cccccc" fill-opacity="0.45"/>
<rect x="1929" y="131.35" width="3" height="1.3" fill="#4fc1ff" fill-opacity="0.62"/>
<rect x="1932" y="131.35" width="1" height="1.3" fill="#cccccc" fill-opacity="0.45"/>
<rect x="1933" y="131.35" width="7" height="1.3" fill="#dcdcaa" fill-opacity="0.62"/>
<rect x="1940" y="131.35" width="1" height="1.3" fill="#cccccc" fill-opacity="0.45"/>
<rect x="1941" y="131.35" width="9" height="1.3" fill="#ce9178" fill-opacity="0.62"/>
<rect x="1951" y="131.35" width="9" height="1.3" fill="#ce9178" fill-opacity="0.62"/>
<rect x="1961" y="131.35" width="14" height="1.3" fill="#ce9178" fill-opacity="0.62"/>
<rect x="1975" y="131.35" width="2" height="1.3" fill="#cccccc" fill-opacity="0.45"/>
<rect x="1918" y="133.35" width="1" height="1.3" fill="#cccccc" fill-opacity="0.45"/>
<rect x="1918" y="137.35" width="6" height="1.3" fill="#569cd6" fill-opacity="0.62"/>
<rect x="1925" y="137.35" width="4" height="1.3" fill="#4ec9b0" fill-opacity="0.62"/>
<rect x="1930" y="137.35" width="9" height="1.3" fill="#dcdcaa" fill-opacity="0.62"/>
<rect x="1939" y="137.35" width="1" height="1.3" fill="#cccccc" fill-opacity="0.45"/>
<rect x="1940" y="137.35" width="7" height="1.3" fill="#4ec9b0" fill-opacity="0.62"/>
<rect x="1948" y="137.35" width="4" height="1.3" fill="#9cdcfe" fill-opacity="0.62"/>
<rect x="1952" y="137.35" width="1" height="1.3" fill="#cccccc" fill-opacity="0.45"/>
<rect x="1954" y="137.35" width="1" height="1.3" fill="#cccccc" fill-opacity="0.45"/>
<rect x="1922" y="139.35" width="6" height="1.3" fill="#4ec9b0" fill-opacity="0.62"/>
<rect x="1928" y="139.35" width="1" height="1.3" fill="#cccccc" fill-opacity="0.45"/>
<rect x="1929" y="139.35" width="3" height="1.3" fill="#4fc1ff" fill-opacity="0.62"/>
<rect x="1932" y="139.35" width="1" height="1.3" fill="#cccccc" fill-opacity="0.45"/>
<rect x="1933" y="139.35" width="7" height="1.3" fill="#dcdcaa" fill-opacity="0.62"/>
<rect x="1940" y="139.35" width="3" height="1.3" fill="#cccccc" fill-opacity="0.45"/>
<rect x="1922" y="141.35" width="6" height="1.3" fill="#4ec9b0" fill-opacity="0.62"/>
<rect x="1928" y="141.35" width="1" height="1.3" fill="#cccccc" fill-opacity="0.45"/>
<rect x="1929" y="141.35" width="3" height="1.3" fill="#4fc1ff" fill-opacity="0.62"/>
<rect x="1932" y="141.35" width="1" height="1.3" fill="#cccccc" fill-opacity="0.45"/>
<rect x="1933" y="141.35" width="5" height="1.3" fill="#dcdcaa" fill-opacity="0.62"/>
<rect x="1938" y="141.35" width="1" height="1.3" fill="#cccccc" fill-opacity="0.45"/>
<rect x="1939" y="141.35" width="6" height="1.3" fill="#ce9178" fill-opacity="0.62"/>
<rect x="1946" y="141.35" width="3" height="1.3" fill="#ce9178" fill-opacity="0.62"/>
<rect x="1950" y="141.35" width="5" height="1.3" fill="#ce9178" fill-opacity="0.62"/>
<rect x="1956" y="141.35" width="9" height="1.3" fill="#ce9178" fill-opacity="0.62"/>
<rect x="1966" y="141.35" width="1" height="1.3" fill="#ce9178" fill-opacity="0.62"/>
<rect x="1967" y="141.35" width="2" height="1.3" fill="#cccccc" fill-opacity="0.45"/>
<rect x="1922" y="143.35" width="6" height="1.3" fill="#4ec9b0" fill-opacity="0.62"/>
<rect x="1929" y="143.35" width="8" height="1.3" fill="#9cdcfe" fill-opacity="0.62"/>
<rect x="1938" y="143.35" width="1" height="1.3" fill="#cccccc" fill-opacity="0.45"/>
<rect x="1940" y="143.35" width="4" height="1.3" fill="#9cdcfe" fill-opacity="0.62"/>
<rect x="1944" y="143.35" width="1" height="1.3" fill="#cccccc" fill-opacity="0.45"/>
<rect x="1945" y="143.35" width="10" height="1.3" fill="#dcdcaa" fill-opacity="0.62"/>
<rect x="1955" y="143.35" width="3" height="1.3" fill="#cccccc" fill-opacity="0.45"/>
<rect x="1922" y="145.35" width="6" height="1.3" fill="#4ec9b0" fill-opacity="0.62"/>
<rect x="1928" y="145.35" width="1" height="1.3" fill="#cccccc" fill-opacity="0.45"/>
<rect x="1929" y="145.35" width="3" height="1.3" fill="#4fc1ff" fill-opacity="0.62"/>
<rect x="1932" y="145.35" width="1" height="1.3" fill="#cccccc" fill-opacity="0.45"/>
<rect x="1933" y="145.35" width="5" height="1.3" fill="#dcdcaa" fill-opacity="0.62"/>
<rect x="1938" y="145.35" width="1" height="1.3" fill="#cccccc" fill-opacity="0.45"/>
<rect x="1939" y="145.35" width="6" height="1.3" fill="#ce9178" fill-opacity="0.62"/>
<rect x="1946" y="145.35" width="3" height="1.3" fill="#ce9178" fill-opacity="0.62"/>
<rect x="1950" y="145.35" width="5" height="1.3" fill="#ce9178" fill-opacity="0.62"/>
<rect x="1956" y="145.35" width="4" height="1.3" fill="#ce9178" fill-opacity="0.62"/>
<rect x="1961" y="145.35" width="6" height="1.3" fill="#ce9178" fill-opacity="0.62"/>
<rect x="1968" y="145.35" width="2" height="1.3" fill="#ce9178" fill-opacity="0.62"/>
<rect x="1970" y="145.35" width="2" height="1.3" fill="#cccccc" fill-opacity="0.45"/>
<rect x="1922" y="147.35" width="6" height="1.3" fill="#4ec9b0" fill-opacity="0.62"/>
<rect x="1929" y="147.35" width="9" height="1.3" fill="#9cdcfe" fill-opacity="0.62"/>
<rect x="1939" y="147.35" width="1" height="1.3" fill="#cccccc" fill-opacity="0.45"/>
<rect x="1941" y="147.35" width="4" height="1.3" fill="#9cdcfe" fill-opacity="0.62"/>
<rect x="1945" y="147.35" width="1" height="1.3" fill="#cccccc" fill-opacity="0.45"/>
<rect x="1946" y="147.35" width="10" height="1.3" fill="#dcdcaa" fill-opacity="0.62"/>
<rect x="1956" y="147.35" width="3" height="1.3" fill="#cccccc" fill-opacity="0.45"/>
<rect x="2026" y="35" width="1" height="117" fill="#0c0c0c"/>
<rect x="2026" y="35" width="18" height="1" fill="#0c0c0c"/>
<rect x="2034" y="35.3" width="8" height="7.5" fill="#8c8c8c"/>
<rect x="2034" y="69" width="8" height="8.0" fill="#8c8c8c"/>
<rect x="2034" y="80" width="8" height="8.5" fill="#8c8c8c"/>
<rect x="2034" y="92" width="8" height="8.5" fill="#8c8c8c"/>
<rect x="2034" y="103.5" width="8" height="8.5" fill="#8c8c8c"/>
<rect x="2034" y="122.5" width="8" height="8.5" fill="#8c8c8c"/>
<rect x="2027" y="126" width="17" height="2.5" fill="#9c9c9c"/>
<g transform="translate(7,1.9) scale(1.68)" fill="#cccccc" ><path fill-rule="evenodd" d="M7.976 10.072l4.357-4.357.62.618L8.284 11h-.618L3 6.333l.619-.618 4.357 4.357z"/></g>
<g transform="translate(346,2.5) scale(1.68)" fill="#cccccc" ><path fill-rule="evenodd" d="M9.5 1.1l3.4 3.5.1.4v2h-1V6H8V2H3v11h4v1H2.5l-.5-.5v-12l.5-.5h6.7l.3.1zM9 2v3h2.9L9 2zm4 14h-1v-3H9v-1h3V9h1v3h3v1h-3v3z"/></g>
<g transform="translate(385.6,2.3) scale(1.68)" fill="#cccccc" ><path fill-rule="evenodd" d="M14.5 2H7.71l-.85-.85L6.51 1h-5l-.5.5v11l.5.5H7v-1H1.99V6h4.49l.35-.15.86-.86H14v1.5l-.001.51h1.011V2.5L14.5 2zm-.51 2h-6.5l-.35.15-.86.86H2v-3h4.29l.85.85.36.15H14l-.01.99zM13 16h-1v-3H9v-1h3V9h1v3h3v1h-3v3z"/></g>
<g transform="translate(425.6,2.1) scale(1.68)" fill="#cccccc" ><path fill-rule="evenodd" d="M5.563 2.516A6.001 6.001 0 0 0 8 14 6 6 0 0 0 9.832 2.285l-.302.953A5.002 5.002 0 0 1 8 13a5 5 0 0 1-2.88-9.088l.443-1.396zM5 3H2V2h3.5l.5.5V6H5V3z"/></g>
<g transform="translate(465.6,2.1) scale(1.68)" fill="#cccccc" ><path fill-rule="evenodd" d="M9 9H4v1h5V9zM5 3l1-1h7l1 1v7l-1 1h-2v2l-1 1H3l-1-1V6l1-1h2V3zm1 2h4l1 1v4h2V3H6v2zm4 1H3v7h7V6z"/></g>
<g transform="translate(7.4,1277.6) scale(1.68)" fill="#cccccc" ><path fill-rule="evenodd" d="M10.072 8.024L5.715 3.667l.618-.62L11 7.716v.618L6.333 13l-.618-.619 4.357-4.357z"/></g>
<g transform="translate(7.4,1314.6) scale(1.68)" fill="#cccccc" ><path fill-rule="evenodd" d="M10.072 8.024L5.715 3.667l.618-.62L11 7.716v.618L6.333 13l-.618-.619 4.357-4.357z"/></g>
<g transform="translate(7.4,1350.6) scale(1.68)" fill="#cccccc" ><path fill-rule="evenodd" d="M10.072 8.024L5.715 3.667l.618-.62L11 7.716v.618L6.333 13l-.618-.619 4.357-4.357z"/></g>
<path d="M44.7 43.9 V55.099999999999994 Q44.7 60.2 39.7 60.2 Q37.1 60.2 35.400000000000006 58.099999999999994" fill="none" stroke="#c84a4a" stroke-width="3.2"/>
<path d="M44.7 80.9 V92.10000000000001 Q44.7 97.2 39.7 97.2 Q37.1 97.2 35.400000000000006 95.10000000000001" fill="none" stroke="#c84a4a" stroke-width="3.2"/>
<path d="M551.5 7.5 V18.7 Q551.5 23.8 546.5 23.8 Q543.9 23.8 542.2 21.7" fill="none" stroke="#c84a4a" stroke-width="3.2"/>
<path d="M795.7 8 L803.3 15.6 L795.7 23.2 M1027.8 8 L1035.4 15.6 L1027.8 23.2" fill="none" stroke="#a9a9a9" stroke-width="1.5"/>
<g fill="none" stroke="#ee9d28" stroke-width="1.6"><rect x="-4.9" y="-2.7" width="9.8" height="5.4" rx="0.6" transform="translate(819.5,9.3) rotate(-45)"/><path d="M821 12.5 V22.8 H830 M821 14.4 H830"/><rect x="-3.9" y="-2" width="7.8" height="4" rx="0.5" transform="translate(833.3,14.9) rotate(-45)"/><rect x="-3.9" y="-2" width="7.8" height="4" rx="0.5" transform="translate(833.3,23.3) rotate(-45)"/></g>
<g fill="none" stroke="#b180d7" stroke-width="1.5" stroke-linejoin="round"><path d="M1057.4 4.6 L1067.1 10 V20.7 L1057.4 26.2 L1048.3 20.7 V10 Z M1048.3 10.4 L1057.4 15.4 L1067.1 10.4 M1057.4 15.4 V26"/></g>
<g fill="none" stroke="#cccccc" stroke-width="1.4" stroke-linecap="round"><path d="M1522.6 175.9 A4.9 7.3 0 0 1 1532.4 175.9"/><path d="M1519 175.7 H1536.2 C1537.3 180 1537.2 185 1535.5 188.5 C1533.8 191.7 1531 193.3 1527.5 193.3 C1524 193.3 1521.2 191.7 1519.5 188.5 C1517.8 185 1517.7 180 1519 175.7 Z"/><path d="M1516.6 172.5 L1519.6 175.5 M1538.4 172.5 L1535.4 175.5 M1514.2 183.4 H1518.2 M1536.8 183.4 H1540.8 M1517.2 193.3 L1521 190 M1537.8 193.3 L1534 190"/><path d="M1523.6 179.7 L1531.4 187.1 M1531.4 179.7 L1523.6 187.1"/></g>
<g transform="translate(1759,168.3) scale(1.68)" fill="#cccccc" ><path fill-rule="evenodd" d="M14 7v1H8v6H7V8H1V7h6V1h1v6h6z"/></g>
<g transform="translate(1788.6,170.6) scale(1.35)" fill="#cccccc" ><path fill-rule="evenodd" d="M7.976 10.072l4.357-4.357.62.618L8.284 11h-.618L3 6.333l.619-.618 4.357 4.357z"/></g>
<g transform="translate(1823.6,168.3) scale(1.68)" fill="#cccccc" ><path fill-rule="evenodd" d="M14 1H3L2 2v11l1 1h11l1-1V2l-1-1zM8 13H3V2h5v11zm6 0H9V2h5v11z"/></g>
<g transform="translate(1867.6,168.3) scale(1.68)" fill="#cccccc" ><path fill-rule="evenodd" d="M10 3h3v1h-1v9l-1 1H4l-1-1V4H2V3h3V2a1 1 0 0 1 1-1h3a1 1 0 0 1 1 1v1zM9 2H6v1h3V2zM4 13h7V4H4v9zm2-8H5v7h1V5zm1 0h1v7H7V5zm2 0h1v7H9V5z"/></g>
<g transform="translate(1910.7,168.2) scale(1.68)" fill="#cccccc" ><path fill-rule="evenodd" d="M4 8a1 1 0 1 1-2 0 1 1 0 0 1 2 0zm5 0a1 1 0 1 1-2 0 1 1 0 0 1 2 0zm5 0a1 1 0 1 1-2 0 1 1 0 0 1 2 0z"/></g>
<g transform="translate(1953.5,166.6) scale(1.68)" fill="#cccccc" ><path fill-rule="evenodd" d="M8.024 5.928l-4.357 4.357-.62-.618L7.716 5h.618L13 9.667l-.619.618-4.357-4.357z"/></g>
<g transform="translate(1997.1,167.2) scale(1.68)" fill="#cccccc" ><path fill-rule="evenodd" d="M8 8.707l3.646 3.647.708-.707L8.707 8l3.647-3.646-.707-.708L8 7.293 4.354 3.646l-.707.708L7.293 8l-3.646 3.646.707.708L8 8.707z"/></g>
</svg>
</body></html>
